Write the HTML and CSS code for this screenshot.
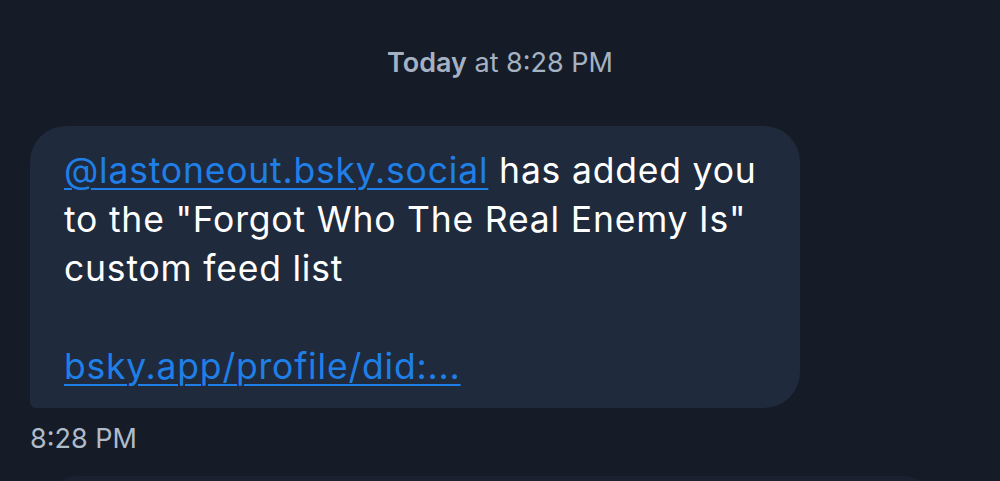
FILE: index.html
```html
<!DOCTYPE html>
<html>
<head>
<meta charset="utf-8">
<link rel="stylesheet" href="styles.css">
</head>
<body>
<div class="chat">
  <div class="day"><b>Today</b> at 8:28 PM</div>
  <div class="bubble">
    <p><a href="#">@lastoneout.bsky.social</a> has added you to the "Forgot Who The Real Enemy Is" custom feed list</p>
    <p class="gap"><a href="#">bsky.app/profile/did:...</a></p>
  </div>
  <div class="time">8:28 PM</div>
  <div class="next"></div>
</div>
</body>
</html>
```
FILE: styles.css
```css
html, body {
  margin: 0;
  padding: 0;
  background: #151c27;
  overflow: hidden;
}
body {
  width: 1000px;
  height: 481px;
  font-family: Inter, "Noto Sans", sans-serif;
}
.chat {
  display: flex;
  flex-direction: column;
  padding: 0 0 0 30px;
}
.day {
  margin-top: 46px;
  align-self: center;
  margin-left: -30px;
  color: #a5b2c4;
  font-size: 27px;
  line-height: 34px;
}
.day b {
  font-weight: 600;
}
.bubble {
  margin-top: 46px;
  width: 700px;
  padding: 20px 36px 17px 34px;
  background: #1f2a3c;
  border-radius: 36px 36px 36px 6px;
  color: #ffffff;
  font-size: 35.5px;
  line-height: 49px;
  letter-spacing: 0.8px;
}
.bubble p {
  margin: 0;
  width: 700px;
}
.bubble p.gap {
  margin-top: 49px;
}
.bubble a {
  color: #1f7fe6;
  text-decoration: underline;
  text-decoration-thickness: 2px;
  text-underline-offset: 5px;
}
.time {
  margin-top: 16px;
  color: #b0bbca;
  font-size: 27px;
  line-height: 30px;
}
.next {
  margin-top: 22px;
  margin-left: 18px;
  width: 885px;
  height: 60px;
  background: #1a2232;
  border-radius: 36px;
}
```
